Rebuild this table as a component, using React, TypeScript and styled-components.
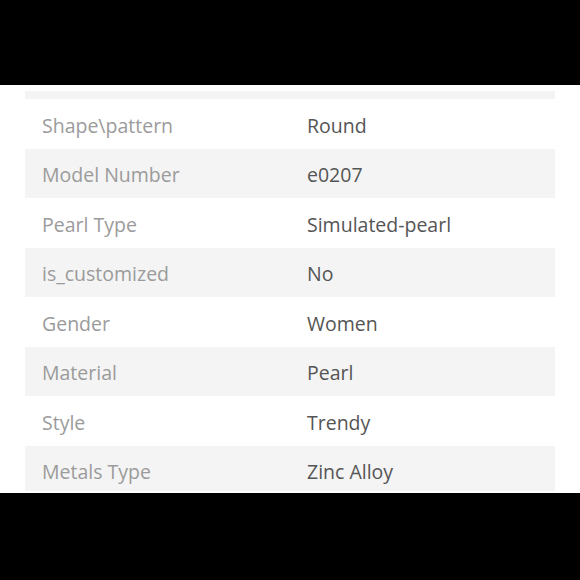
import React from "react";
import styled, { createGlobalStyle } from "styled-components";

type Spec = {
  name: string;
  value: string;
};

const specs: Spec[] = [
  { name: "Shape\\pattern", value: "Round" },
  { name: "Model Number", value: "e0207" },
  { name: "Pearl Type", value: "Simulated-pearl" },
  { name: "is_customized", value: "No" },
  { name: "Gender", value: "Women" },
  { name: "Material", value: "Pearl" },
  { name: "Style", value: "Trendy" },
  { name: "Metals Type", value: "Zinc Alloy" },
];

function App() {
  return (
    <>
      <GlobalStyle />
      <Screen>
        <Letterbox />
        <Sheet>
          <Table>
            <Row $shaded $clipped />
            {specs.map((s, i) => (
              <Row key={s.name} $shaded={i % 2 === 1}>
                <Label>{s.name}</Label>
                <Value>{s.value}</Value>
              </Row>
            ))}
          </Table>
        </Sheet>
        <Letterbox $grow />
      </Screen>
    </>
  );
}

export default App;

const GlobalStyle = createGlobalStyle`
  html, body {
    margin: 0;
    padding: 0;
    background: #000;
  }
  * {
    box-sizing: border-box;
  }
`;

const Screen = styled.div`
  width: 580px;
  height: 580px;
  display: flex;
  flex-direction: column;
  background: #000;
  font-family: "Open Sans", "Liberation Sans", sans-serif;
`;

const Letterbox = styled.div<{ $grow?: boolean }>`
  height: 85px;
  flex: ${(p) => (p.$grow ? "1" : "none")};
  background: #000;
`;

const Sheet = styled.div`
  height: 408px;
  background: #fff;
  padding: 6px 25px 2px 25px;
  overflow: hidden;
`;

const Table = styled.div`
  height: 100%;
  display: flex;
  flex-direction: column;
  overflow: hidden;
`;

const Row = styled.div<{ $shaded?: boolean; $clipped?: boolean }>`
  flex: none;
  height: ${(p) => (p.$clipped ? "8px" : "49.5px")};
  display: grid;
  grid-template-columns: 265px 1fr;
  align-items: center;
  padding: 3px 0 0 17px;
  background: ${(p) => (p.$shaded ? "#f4f4f4" : "#fff")};
  font-size: 19.5px;
  line-height: 1;
`;

const Label = styled.span`
  color: #9b9b9b;
`;

const Value = styled.span`
  color: #555;
`;
